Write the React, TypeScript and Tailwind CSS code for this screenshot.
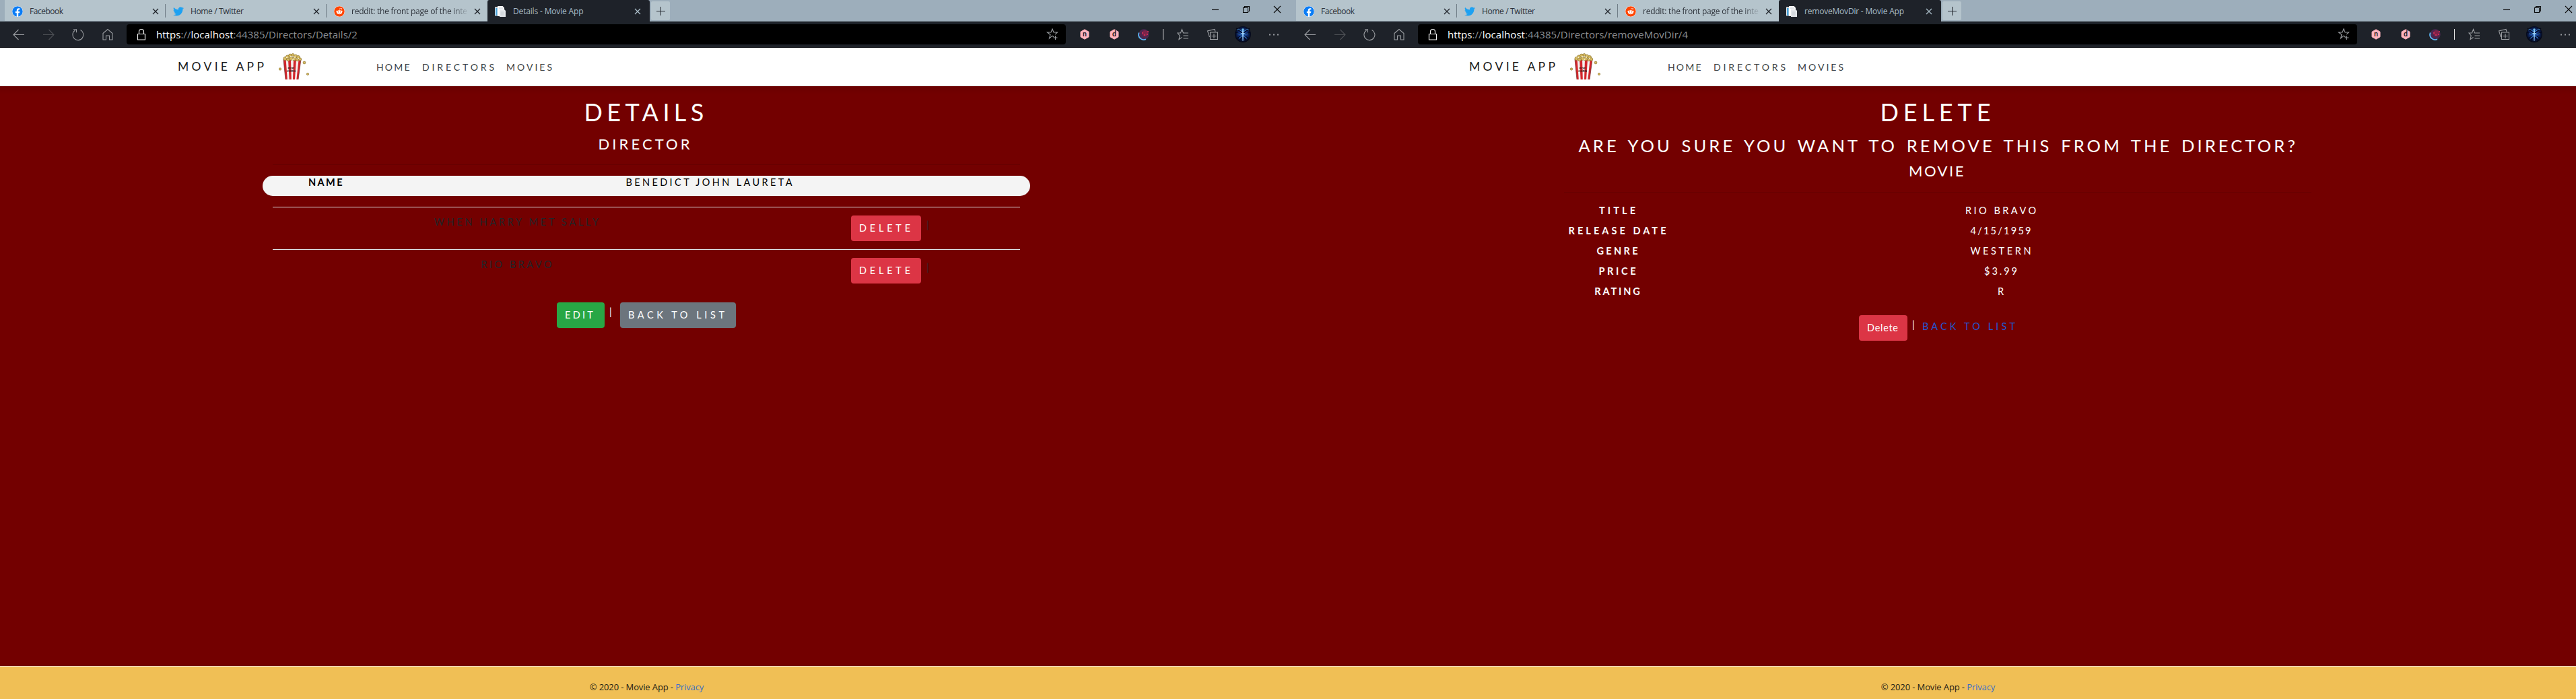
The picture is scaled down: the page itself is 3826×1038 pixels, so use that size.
import type { ReactNode } from "react";
import { FaFacebook, FaTwitter, FaReddit } from "react-icons/fa";

function Close({ className }: { className: string }) {
  return (
    <svg viewBox="0 0 10 10" className={`h-[10px] w-[10px] shrink-0 ${className}`} fill="none" stroke="currentColor" strokeWidth="1.3">
      <path d="M1 1l8 8M9 1L1 9" />
    </svg>
  );
}

function Tab({ icon, children, sep = true }: { icon: ReactNode; children: ReactNode; sep?: boolean }) {
  return (
    <div className="relative flex h-[31px] w-[239px] items-center bg-[#b5c4cc] pt-[2px] pl-[11px] text-[#2b3038]">
      <div className="h-4 w-4 shrink-0">{icon}</div>
      <div className="ml-[10px] w-[174px] overflow-hidden whitespace-nowrap">{children}</div>
      <Close className="ml-[7.5px] text-[#22262d]" />
      {sep && <div className="absolute top-[6px] right-0 h-[20px] w-px bg-[#6f7c86]" />}
    </div>
  );
}

function DocIcon() {
  return (
    <svg viewBox="0 0 16 16" className="h-4 w-4">
      <path d="M0 1.5h6v13H0z" fill="#e9edf0" />
      <path d="M1 3h2.6v11H1z" fill="#4ba3d8" />
      <path d="M4 0h7.5L14 2.5V15H4z" fill="#fbfbfb" />
      <path d="M7 5h7l2 2v9H7z" fill="#e3e6ea" />
      <path d="M6 3h6M8.5 9h5M8.5 11h5M8.5 13h5" stroke="#bcc3ca" strokeWidth=".8" />
    </svg>
  );
}

function Popcorn() {
  return (
    <svg viewBox="0 0 46 40" className="h-[40px] w-[46px]">
      <path d="M7 9h26l-4 30H10z" fill="#f4efee" />
      <path d="M7 9h3.6l2.2 30H10zM14 9h4l.8 30h-3.2zM22 9h4l-2 30h-3zM29.6 9H33l-4 30h-2.6z" fill="#d3262c" />
      <path d="M7 9l3 30M33 9l-4 30" stroke="#6b2a2a" strokeWidth=".7" />
      <g fill="#d9bd62" stroke="#8a712c" strokeWidth=".7">
        <circle cx="9.500" cy="8" r="2.600" /><circle cx="13" cy="5.500" r="2.600" /><circle cx="17" cy="3.500" r="2.400" />
        <circle cx="21" cy="2.500" r="2" /><circle cx="25" cy="4.500" r="2.500" /><circle cx="29" cy="6" r="2.500" />
        <circle cx="31.500" cy="9" r="2.200" /><circle cx="14" cy="9.500" r="2.300" /><circle cx="18.500" cy="8" r="2.500" />
        <circle cx="23" cy="8.500" r="2.500" /><circle cx="27.500" cy="9.700" r="2" />
        <circle cx="2" cy="23.500" r="1.700" /><circle cx="38" cy="14" r="1.900" /><circle cx="43" cy="31" r="1.600" />
      </g>
      <g fill="#fbf4d8"><circle cx="12" cy="6.500" r="1" /><circle cx="18" cy="5" r="1" /><circle cx="24" cy="6" r="1" /><circle cx="21" cy="9" r="1" /><circle cx="29" cy="8" r="1" /></g>
      <g fill="#2a1515" fontFamily="Lato, sans-serif" fontWeight="700" fontSize="4.500" textAnchor="middle">
        <text x="18" y="23.500">POP</text>
        <text x="18.500" y="27.500">CORN</text>
      </g>
    </svg>
  );
}

function Hex({ letter }: { letter: string }) {
  return (
    <div className="flex w-11 justify-center">
      <svg viewBox="0 0 14 16" className="h-[16px] w-[14px]">
        <path d="M7 .8l6 3.400v7.600l-6 3.400-6-3.400V4.200z" fill="#ffb3bd" stroke="#ffb3bd" strokeLinejoin="round" />
        <text x="7" y="11.300" textAnchor="middle" fontSize="10.500" fontWeight="700" fontFamily="Lato, sans-serif" fill="#15151b">{letter}</text>
      </svg>
    </div>
  );
}

function Cell({ children }: { children: ReactNode }) {
  return (
    <svg viewBox="-22 -12 44 24" className="h-6 w-11 shrink-0" fill="none" stroke="currentColor" strokeWidth="1.1">
      {children}
    </svg>
  );
}

function Avatar({ id }: { id: string }) {
  return (
    <div className="ml-px flex w-11 justify-center">
      <svg viewBox="-12 -12 24 24" className="h-6 w-6">
        <defs>
          <radialGradient id={id} cy=".48">
            <stop offset="0" stopColor="#2f74d6" />
            <stop offset=".5" stopColor="#0f2f7c" />
            <stop offset="1" stopColor="#040613" />
          </radialGradient>
        </defs>
        <circle r="12" fill={`url(#${id})`} />
        <path d="M-1-2L-10-9M1-2L10-9M-2 0L-11-3M2 0L11-3M-2 2L-9 6M2 2L9 6M-1 4L-5 9M1 4L5 9" stroke="#04081a" strokeWidth="1.300" />
        <path d="M-1-4L-7-8L-9-6M1-4L7-8L9-6M-1 0L-8-1M1 0L8-1M-1 2L-6 6M1 2L6 6" stroke="#4fa0e8" strokeWidth=".8" fill="none" />
        <path d="M-1-6h2L.8 2 .4 10h-.8L-.8 2zM-2.500-2h5v1h-5z" fill="#9fd2f8" />
        <circle cy="-7" r="1.700" fill="#6fc0e8" />
      </svg>
    </div>
  );
}

function BrowserChrome({ id, title, path }: { id: string; title: ReactNode; path: ReactNode }) {
  return (
    <div className="h-[71px] font-['Open_Sans',sans-serif]">
      <div className="flex h-8 border-b border-[#8796a1] bg-[#9daebb] pl-[7px] text-[12px]">
        <Tab icon={<FaFacebook className="h-4 w-4 rounded-full bg-white text-[#0a7cf5]" />}><span className="tracking-[-0.49px]">Facebook</span></Tab>
        <Tab icon={<FaTwitter className="h-4 w-4 text-[#1da1f2]" />}><span className="tracking-[-0.36px]">Home / Twitter</span></Tab>
        <Tab sep={false} icon={<FaReddit className="h-4 w-4 rounded-full bg-white text-[#ff4500]" />}>
          <div className="bg-gradient-to-r from-[#2b3038] from-85% to-[#b5c4cc] bg-clip-text tracking-[-0.24px] text-transparent">reddit: the front page of the inte</div>
        </Tab>
        <div className="flex h-8 w-[241px] items-center rounded-t-[3px] bg-[#1e2229] pt-px pl-[11px] text-[#a9bcc7]">
          <DocIcon />
          <div className="ml-[11px] w-[180px] whitespace-nowrap">{title}</div>
          <Close className="text-[#a9bcc7]" />
        </div>
        <div className="mt-[2px] ml-[2px] flex h-7 w-7 items-center justify-center rounded-[2px] bg-[#b5c4cc]">
          <svg viewBox="0 0 13 13" className="h-[13px] w-[13px]" stroke="#22262d"><path d="M6.500 0v13M0 6.500h13" /></svg>
        </div>
        <div className="-mr-px ml-auto flex h-7 w-[136px] gap-[2px] text-[#0a0a0a]">
          <Cell><path d="M-5 2.500H5" /></Cell>
          <Cell><path d="M-4.500-.5h7v7h-7zM-2.500-.5v-2h7v7h-2" /></Cell>
          <Cell><path d="M-5-3L5 7M5-3L-5 7" /></Cell>
        </div>
      </div>
      <div className="flex h-[39px] items-center border-b border-[#14161b] bg-[#1e2229] pl-[6px] text-[#9a9da1]">
        <Cell><path d="M8 .5H-8M-.500-7L-8 .5-.500 8" /></Cell>
        <Cell><path className="text-[#4d5055]" stroke="currentColor" d="M-8 .5H8M.5-7L8 .5.500 8" /></Cell>
        <Cell><path d="M3.500-6.500A8 8 0 1 1-4.500-6M-7-7.200h4.500v4.500" /></Cell>
        <Cell><path d="M-7-1.500L0-7.500l7 6V8H2.500V2h-5v6H-7z" /></Cell>
        <div className="ml-[6px] flex h-[30px] w-[1395px] items-center rounded-[4px] bg-black">
          <svg viewBox="-22 -12 44 24" className="h-6 w-11" fill="none" stroke="#f2f2f2" strokeWidth="1.200">
            <path d="M-5.500-.5h11v8.500h-11zM-3.500-.5v-3.500a3.500 3.500 0 0 1 7 0v3.500" />
          </svg>
          <div className="mt-px text-[15px] whitespace-nowrap text-[#8f9295]">{path}</div>
          <div className="-mr-[2px] ml-auto">
            <Cell><path d="M2.500 4L0 2.200-4.500 6l1.500-5.500L-7.500-3h5.500L0-8l2 5h5.500L4 .2M4.500 2v6M1.500 5h6" /></Cell>
          </div>
        </div>
        <div className="ml-[6px] flex items-center">
          <Hex letter="n" />
          <Hex letter="d" />
          <Cell>
            <circle r="7.700" fill="#4a2750" stroke="none" />
            <circle cx="1.500" cy="-1.500" r="4.500" fill="#7c2349" stroke="none" />
            <path d="M-7.300-2.500A7.600 7.600 0 0 0 3 7.300" stroke="#5ab4f0" strokeWidth="1.800" />
            <path d="M-3-2h2M5-4h2M4 0h2M0 1h2" stroke="#e0305a" strokeWidth="1.500" />
          </Cell>
          <div className="ml-[6px] h-4 w-px bg-[#e0e0e0]" />
          <div className="ml-[7px] flex">
            <Cell><path d="M-1.500 4.500L-6 7.500l1.200-5.500L-8-2h4.500L-1.500-7.500.500-2H8M.5 2H8M.5 6H8" /></Cell>
            <Cell><path d="M-3.500-3h11v10.500h-11zM2-1v7M-1.500 2.500h7M-4.500 4l-3-9L3-7.500 4-4" /></Cell>
            <Avatar id={id} />
            <div className="-mr-4 ml-[2px]">
              <Cell><path d="M-7 .5h2M-1 .5h2M5 .5h2" strokeWidth="2" /></Cell>
            </div>
          </div>
        </div>
      </div>
    </div>
  );
}

function NavBar() {
  return (
    <nav className="flex h-[57px] items-center border-b border-[#dee2e6] bg-white pl-[264px] text-[14px] whitespace-nowrap text-[#3a3f44]">
      <a className="w-[150px] text-[17.5px] tracking-[4.3px] text-[#1a1a1a]">MOVIE APP</a>
      <Popcorn />
      <a className="ml-[99px] w-[68px] tracking-[2.17px]">HOME</a>
      <a className="w-[125px] tracking-[3.88px]">DIRECTORS</a>
      <a className="w-[68px] tracking-[3px]">MOVIES</a>
    </nav>
  );
}

function Footer() {
  return (
    <footer className="flex h-[49px] justify-center border-t border-[#f3d9c0] bg-[#f0bf55] pt-[20px] pl-[3px] font-['Open_Sans',sans-serif] text-[13px] leading-[20px] tracking-[-0.12px] whitespace-pre text-[#1c1c14]">
      © 2020 - Movie App - <a className="text-[#3b6fc8]">Privacy</a>
    </footer>
  );
}

function Page({ children, ...chrome }: { id: string; title: ReactNode; path: ReactNode; children: ReactNode }) {
  return (
    <section className="flex h-[1038px] w-[1918px] shrink-0 flex-col">
      <BrowserChrome {...chrome} />
      <NavBar />
      <main className="flex-1 bg-[#730000] bg-gradient-to-b from-[#6a0000] to-[#730000] to-[12px] pt-4 pl-[390px] text-white">
        <div className="flex w-[1140px] flex-col items-center text-[14.5px] leading-[20px] whitespace-nowrap">{children}</div>
      </main>
      <Footer />
    </section>
  );
}

function MovieRow({ children }: { children: ReactNode }) {
  return (
    <div className="flex h-[63px] w-[1110px] border-t border-[#dee2e6] pt-3 text-[#212529]">
      <div className="flex w-[724px] justify-center">{children}</div>
      <div className="flex w-[386px] justify-center">
        <div className="flex w-[116px]">
          <a className="flex h-[38px] w-[104px] items-center rounded-[4px] bg-[#dc3545] pl-[12px] tracking-[4.77px] text-white">DELETE</a>
          <span className="mt-[4px] ml-[8px]">|</span>
        </div>
      </div>
    </div>
  );
}

function Field({ label, children }: { label: ReactNode; children: ReactNode }) {
  return (
    <div className="flex h-[30px] w-full items-center">
      <div className="flex w-[188px] justify-center font-bold">{label}</div>
      <div className="flex w-[951px] justify-center">{children}</div>
    </div>
  );
}

export default function App() {
  return (
    <div className="flex h-[1038px] w-[3826px] overflow-hidden font-['Lato',sans-serif]">
      <Page
        id="avatar-left"
        title={<span className="tracking-[-0.16px]">Details - Movie App</span>}
        path={<span className="tracking-[0.03px]"><span className="text-white">https</span>://<span className="text-white">localhost</span>:44385/Directors/Details/2</span>}
      >
        <h1 className="w-[185px] text-[36px] leading-[44px] tracking-[6.4px]">DETAILS</h1>
        <h4 className="mt-[13px] w-[143px] text-[22px] leading-[26px] tracking-[4.1px]">DIRECTOR</h4>
        <div className="mt-[17px] h-px w-[1110px] bg-[#670000]" />
        <div className="mt-4 flex h-[30px] w-[1140px] rounded-[15px] bg-[#f4f4f4] pl-[68px] text-black">
          <b className="w-[471.500px] tracking-[2.4px]">NAME</b>
          <span className="tracking-[3.38px]">BENEDICT JOHN LAURETA</span>
        </div>
        <div className="mt-4">
          <MovieRow><span className="w-[244px] tracking-[3.69px]">WHEN HARRY MET SALLY</span></MovieRow>
          <MovieRow><span className="w-[105px] tracking-[3.49px]">RIO BRAVO</span></MovieRow>
        </div>
        <div className="mt-4 flex w-[266px]">
          <a className="flex h-[38px] w-[71px] shrink-0 items-center rounded-[4px] bg-[#28a745] pl-[12px] tracking-[3.3px]">EDIT</a>
          <span className="mt-[4px] ml-[7px] w-[16px]">|</span>
          <a className="flex h-[38px] w-[172px] shrink-0 items-center rounded-[4px] bg-[#6c757d] pl-[12px] tracking-[4.57px]">BACK TO LIST</a>
        </div>
      </Page>
      <Page
        id="avatar-right"
        title={<span className="tracking-[-0.2px]">removeMovDir - Movie App</span>}
        path={<span className="tracking-[0.06px]"><span className="text-white">https</span>://<span className="text-white">localhost</span>:44385/Directors/removeMovDir/4</span>}
      >
        <h1 className="w-[171px] text-[36px] leading-[44px] tracking-[6.9px]">DELETE</h1>
        <h3 className="mt-[13px] w-[1067px] text-[25.5px] leading-[30px] tracking-[4.11px] [word-spacing:3px]">ARE YOU SURE YOU WANT TO REMOVE THIS FROM THE DIRECTOR?</h3>
        <h4 className="mt-[10px] w-[86px] text-[22px] leading-[26px] tracking-[2.5px]">MOVIE</h4>
        <div className="mt-[18px] h-px w-[1110px] bg-[#670000]" />
        <div className="mt-3 w-full">
          <Field label={<span className="w-[54px] tracking-[4.11px]">TITLE</span>}><span className="w-[105px] tracking-[3.49px]">RIO BRAVO</span></Field>
          <Field label={<span className="w-[145px] tracking-[4.07px]">RELEASE DATE</span>}><span className="w-[90px] tracking-[2.25px]">4/15/1959</span></Field>
          <Field label={<span className="w-[61px] tracking-[3.32px]">GENRE</span>}><span className="w-[90px] tracking-[3.61px]">WESTERN</span></Field>
          <Field label={<span className="w-[55px] tracking-[3.62px]">PRICE</span>}><span className="w-[49px] tracking-[2.98px]">$3.99</span></Field>
          <Field label={<span className="w-[67.5px] tracking-[2.88px]">RATING</span>}><span>R</span></Field>
        </div>
        <div className="mt-5 flex w-[234px]">
          <button className="flex h-[38px] w-[72px] shrink-0 items-center rounded-[4px] bg-[#dc3545] pl-[12px] tracking-[0.71px]">Delete</button>
          <span className="mt-[4px] ml-[7px] w-[15px] shrink-0">|</span>
          <a className="mt-[7px] shrink-0 tracking-[4.12px] text-[#2456cf]">BACK TO LIST</a>
        </div>
      </Page>
    </div>
  );
}
